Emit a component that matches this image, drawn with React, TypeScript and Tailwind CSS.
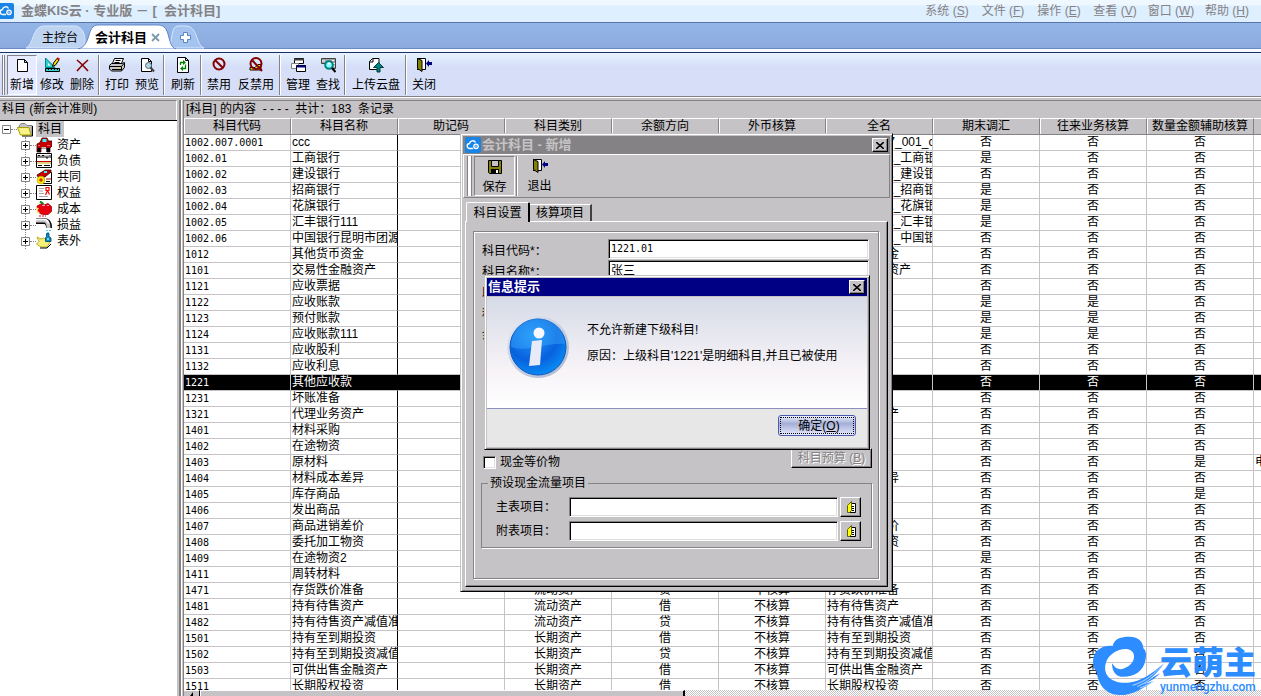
import React from 'react';

type IconProps = { name: string; size?: number };

interface Row {
  code: string;
  name: string;
  kind: string;
  dir: string;
  full?: string;
  fx?: boolean;
  trade?: boolean;
  qty?: boolean;
  unit?: string;
}

const CUR = '流动资产';
const LONG = '长期资产';

const ROWS: Row[] = [
  { code: '1002.007.0001', name: 'ccc', kind: CUR, dir: '借', full: '银行存款_07_001_ccc' },
  { code: '1002.01', name: '工商银行', kind: CUR, dir: '借', full: '银行存款_总_工商银行', fx: true },
  { code: '1002.02', name: '建设银行', kind: CUR, dir: '借', full: '银行存款_总_建设银行' },
  { code: '1002.03', name: '招商银行', kind: CUR, dir: '借', full: '银行存款_总_招商银行', fx: true },
  { code: '1002.04', name: '花旗银行', kind: CUR, dir: '借', full: '银行存款_总_花旗银行', fx: true },
  { code: '1002.05', name: '汇丰银行111', kind: CUR, dir: '借', full: '银行存款_总_汇丰银行111', fx: true },
  { code: '1002.06', name: '中国银行昆明市团源支行', kind: CUR, dir: '借', full: '银行存款_总_中国银行' },
  { code: '1012', name: '其他货币资金', kind: CUR, dir: '借' },
  { code: '1101', name: '交易性金融资产', kind: CUR, dir: '借' },
  { code: '1121', name: '应收票据', kind: CUR, dir: '借' },
  { code: '1122', name: '应收账款', kind: CUR, dir: '借', fx: true, trade: true },
  { code: '1123', name: '预付账款', kind: CUR, dir: '借', fx: true, trade: true },
  { code: '1124', name: '应收账款111', kind: CUR, dir: '借', full: '应收账款', fx: true, trade: true },
  { code: '1131', name: '应收股利', kind: CUR, dir: '借' },
  { code: '1132', name: '应收利息', kind: CUR, dir: '借' },
  { code: '1221', name: '其他应收款', kind: CUR, dir: '借' },
  { code: '1231', name: '坏账准备', kind: CUR, dir: '贷' },
  { code: '1321', name: '代理业务资产', kind: CUR, dir: '借' },
  { code: '1401', name: '材料采购', kind: CUR, dir: '借' },
  { code: '1402', name: '在途物资', kind: CUR, dir: '借' },
  { code: '1403', name: '原材料', kind: CUR, dir: '借', qty: true, unit: '电' },
  { code: '1404', name: '材料成本差异', kind: CUR, dir: '借' },
  { code: '1405', name: '库存商品', kind: CUR, dir: '借', qty: true },
  { code: '1406', name: '发出商品', kind: CUR, dir: '借' },
  { code: '1407', name: '商品进销差价', kind: CUR, dir: '贷' },
  { code: '1408', name: '委托加工物资', kind: CUR, dir: '借' },
  { code: '1409', name: '在途物资2', kind: CUR, dir: '借', fx: true },
  { code: '1411', name: '周转材料', kind: CUR, dir: '借' },
  { code: '1471', name: '存货跌价准备', kind: CUR, dir: '贷' },
  { code: '1481', name: '持有待售资产', kind: CUR, dir: '借' },
  { code: '1482', name: '持有待售资产减值准备', kind: CUR, dir: '贷' },
  { code: '1501', name: '持有至到期投资', kind: LONG, dir: '借' },
  { code: '1502', name: '持有至到期投资减值准备', kind: LONG, dir: '贷' },
  { code: '1503', name: '可供出售金融资产', kind: LONG, dir: '借' },
  { code: '1511', name: '长期股权投资', kind: LONG, dir: '借' },
];

const COLUMNS = ['科目代码', '科目名称', '助记码', '科目类别', '余额方向', '外币核算', '全名', '期末调汇', '往来业务核算', '数量金额辅助核算'];

const MENUS = [
  ['系统', 'S'],
  ['文件', 'F'],
  ['操作', 'E'],
  ['查看', 'V'],
  ['窗口', 'W'],
  ['帮助', 'H'],
];

const TOOLS = [
  [{ label: '新增', icon: 'new' }, { label: '修改', icon: 'edit' }, { label: '删除', icon: 'delete' }],
  [{ label: '打印', icon: 'print' }, { label: '预览', icon: 'preview' }],
  [{ label: '刷新', icon: 'refresh' }],
  [{ label: '禁用', icon: 'ban' }, { label: '反禁用', icon: 'unban' }],
  [{ label: '管理', icon: 'manage' }, { label: '查找', icon: 'find' }],
  [{ label: '上传云盘', icon: 'upload' }],
  [{ label: '关闭', icon: 'exit' }],
];

const TREE = [
  { label: '资产', icon: 'car' },
  { label: '负债', icon: 'bill' },
  { label: '共同', icon: 'shared' },
  { label: '权益', icon: 'cert' },
  { label: '成本', icon: 'apple' },
  { label: '损益', icon: 'tap' },
  { label: '表外', icon: 'bag' },
];

const ICONS: Record<string, React.ReactNode> = {
  new: <path d="M3.500 2.500h7l3 3v9h-10z M10.500 2.500v3h3" fill="#fff" stroke="#000" />,
  edit: (
    <>
      <path d="M1.500 1v9.500H11z" fill="#31cfce" stroke="#008284" />
      <path d="M4 6v2.500h2.500z" fill="#fff" />
      <path d="M1.500 11.500h14v3h-14z" fill="#31cfce" stroke="#000" />
      <path d="M4.500 12v1M7.500 12v1M10.500 12v1M13.500 12v1" stroke="#000" />
      <path d="M8.500 9.500l1-3.500 3.500-4.500 2 1.500-3.500 5z" fill="#ffdf00" stroke="#000" />
      <path d="M13 1l2.500 1.500" stroke="#d00" strokeWidth="2" />
    </>
  ),
  delete: <path d="M3 3l5 4.500 6 6.500M14 3L8 8.500 3 14" fill="none" stroke="#840000" strokeWidth="1.600" />,
  print: (
    <>
      <path d="M5.500 1.500h9l-2.500 6H3z" fill="#fff" stroke="#000" />
      <path d="M6.500 3.500h5M5.500 5.500h5" stroke="#000" />
      <path d="M.5 8.500l2-2h10.500l2.500-1v5l-3 3.500H2.500l-2-2z" fill="#c6c3c6" stroke="#000" />
      <path d="M1 9.500h11.500l2.500-3M3 12.500h9.500M12.500 9.500v4" stroke="#000" />
      <path d="M9 11h2" stroke="#ffdf00" />
    </>
  ),
  preview: (
    <>
      <path d="M2.500 1.500h7l3 3v10h-10z M9.500 1.500v3h3" fill="#fff" stroke="#000" />
      <circle cx="9.500" cy="8.500" r="3" fill="#a5d7e7" stroke="#636163" />
      <path d="M11.500 10.500l3.500 4" stroke="#424142" strokeWidth="2" />
    </>
  ),
  refresh: (
    <>
      <path d="M2.500 .5h8l3 3v12h-11z M10.500 .5v3h3" fill="#fff" stroke="#000" />
      <path d="M5.500 8V5.500h3M10.500 7.500v4h-3" stroke="#008200" strokeWidth="1.300" />
      <path d="M8 3l3 2.500L8 8zM8 9l-3 2.500L8 14z" fill="#008200" />
    </>
  ),
  ban: (
    <>
      <circle cx="8" cy="7" r="5.500" fill="none" stroke="#840000" strokeWidth="2" />
      <path d="M4 3l8 8" stroke="#840000" strokeWidth="2" />
    </>
  ),
  unban: (
    <>
      <path d="M2 10.500h5l3-3h3v5.500H2z" fill="#ffef00" stroke="#000" />
      <circle cx="8" cy="6.500" r="5.500" fill="none" stroke="#840000" strokeWidth="2" />
      <path d="M4 3l10 11" stroke="#840000" strokeWidth="2" />
    </>
  ),
  manage: (
    <>
      <path d="M4.500 1.500h9v5h-9z" fill="#fff" stroke="#000" />
      <path d="M4 2.500h10" stroke="#424142" strokeWidth="2" />
      <path d="M1.500 6.500h7v5h-7z" fill="#fff" stroke="#848284" />
      <path d="M6.500 8.500h9v6h-9z" fill="#fff" stroke="#000" />
      <path d="M6 9.500h10" stroke="#00007b" strokeWidth="2" />
    </>
  ),
  find: (
    <>
      <path d="M1.500 1.500h14v10h-4v-1h-6v-4h-4z" fill="#a5a2a5" stroke="#424142" />
      <path d="M2 4h3M12 3.500h2M13 6.500h2M13 9h2" stroke="#fff" />
      <circle cx="9" cy="8" r="3.800" fill="#84ffff" stroke="#008284" strokeWidth="2" />
      <path d="M8 7l2-1" stroke="#fff" strokeWidth="1.500" />
      <path d="M12 11l3.500 4" stroke="#000" strokeWidth="2" />
    </>
  ),
  upload: (
    <>
      <path d="M1.500 12.500v-8l3-3h6.500v11z M5 1.500v3.500H1.500" fill="#fff" stroke="#000" />
      <path d="M10.500 5.500l5 5h-3.500v4.500H9v-4.500H5.500z" fill="#008284" stroke="#003c3c" />
    </>
  ),
  exit: (
    <>
      <path d="M1 1.500h8.500v11H1" fill="#fff" stroke="#000" />
      <path d="M1.500 1.500l4.500 2v11l-4.500-3z" fill="#848200" stroke="#000" />
      <path d="M10 6.500L13 3v2h3v3h-3v2z" fill="#000084" />
    </>
  ),
  save: (
    <>
      <path d="M1.500 1.500h13v13h-12l-1-1z" fill="#848200" stroke="#000" />
      <path d="M4.500 1.500h7v6h-7z" fill="#c6c3c6" stroke="#000" />
      <path d="M4 10h8v4H4z" fill="#000" />
      <path d="M9 11h2v3H9z" fill="#fff" />
    </>
  ),
  lookup: (
    <>
      <path d="M8.500 4.500h4v9h-6" fill="#fff" stroke="#000" />
      <path d="M9 7.500h2M9 9.500h2M9 11.500h2" stroke="#000" />
      <path d="M4.500 6.500l4-4v9l-2 2h-2z" fill="#ffff00" stroke="#636100" />
    </>
  ),
  folder: (
    <>
      <path d="M2 5l2-2.500h4l2 2h5v9.500H5z" fill="#c6c3c6" stroke="#848284" />
      <path d="M15.500 5v10H5" stroke="#000" />
      <path d="M.5 6.500h11.500l2 7.500H3.500z" fill="#f7ef73" stroke="#a5a200" />
      <path d="M3 8h8M4 10h8M5 12h7" stroke="#fffbce" strokeDasharray="1 1" />
    </>
  ),
  car: (
    <>
      <path d="M1 7l3-1.500L6 1h5l1.500 3H16v5l-2 2v4h-3v-4H5v4H1z" fill="#c60000" stroke="#420000" strokeWidth=".8" />
      <path d="M6.500 2h4v3h-4z" fill="#42efff" />
      <path d="M1.500 11h3v4h-3zM10.500 11h3.500v4h-3.500z" fill="#000" />
      <path d="M2 8.500h2M11 8.500h3" stroke="#f66" />
      <path d="M5.500 10.500h4.500" stroke="#c6c3c6" />
    </>
  ),
  bill: (
    <>
      <path d="M.5 .5h15v14H.5z" fill="#fff" stroke="#000" />
      <path d="M2 5V2.500h2V5M6 5V2.500h2V5M10 2.500V5h2V2.500M14 2v3" stroke="#000" />
      <path d="M1 8.500h14" stroke="#c00000" />
      <path d="M1 10h14" stroke="#c6a600" />
      <path d="M2 12.500h4M8 12.500h6" stroke="#000" />
    </>
  ),
  shared: (
    <>
      <path d="M7.500 3.500h8v11h-8z" fill="#fff" stroke="#000" />
      <path d="M1 6l5-3 3-2h6v2L9 8H2z" fill="#c60000" stroke="#420000" strokeWidth=".8" />
      <path d="M8 2h3v2H8z" fill="#42efff" />
      <path d="M10 10h5" stroke="#c00000" />
      <path d="M10 12.500h4" stroke="#000" />
      <circle cx="5" cy="11" r="3.800" fill="#ffef00" stroke="#c6a600" strokeWidth=".8" />
      <path d="M5 9v4M3 11h4" stroke="#c00000" />
    </>
  ),
  cert: (
    <>
      <path d="M.5 .5h15v14H.5z" fill="#fff" stroke="#000" />
      <path d="M3 3.500h5M3 6h4M3 8.500h5M3 11.500h9" stroke="#a5a2a5" />
      <path d="M10 2.500h3v3h-3zM11.500 5.500l-2 4.500M11.500 5.500l2 4" fill="none" stroke="#f00" strokeWidth="1.200" />
    </>
  ),
  apple: (
    <>
      <path d="M7.500 3L4 .5" stroke="#008200" strokeWidth="2" />
      <path d="M1 5l4-2 3 1 4-1.500 3.500 3v5L12 13.500H8L5 13l-3-2z" fill="#e70010" stroke="#a50000" strokeWidth=".8" />
      <path d="M0 6l3 1.500L1.500 9.500 4 12 1 12z" fill="#ffdf63" />
      <path d="M6 4.500h3M11 4.500h2" stroke="#ff9ac6" />
      <path d="M3 15h7" stroke="#e70010" strokeDasharray="2 1" />
    </>
  ),
  tap: (
    <>
      <path d="M0 4h8q5 0 5 7" fill="none" stroke="#000" strokeWidth="6" />
      <path d="M0 3.500h8q4.500 0 4.500 7.500" fill="none" stroke="#c6c3c6" strokeWidth="4" />
      <path d="M0 2.500h8q3.500 0 4.500 4" stroke="#fff" strokeWidth="1.500" />
      <path d="M10 13.500h5M11 15.500h3" stroke="#42d7ff" strokeDasharray="2 1" />
    </>
  ),
  bag: (
    <>
      <path d="M1 4l4 2 3-1 3 3 3 1-3 5H5l-4.500-3L3 8.500z" fill="#f7ef7b" stroke="#a5a200" strokeWidth=".8" />
      <path d="M4 15h7l4-4" stroke="#000" fill="none" />
      <path d="M10.500 .5h2.500v3l2 1.500v3.500h-5.500V5l1-1.500z" fill="#0092c6" stroke="#003c63" strokeWidth=".8" />
      <path d="M11 6h2" stroke="#fff" />
    </>
  ),
};

const Icon: React.FC<IconProps> = ({ name, size = 16 }) => (
  <svg width={size} height={size} viewBox="0 0 16 16" fill="none" className="block shrink-0" aria-hidden="true">
    {ICONS[name]}
  </svg>
);

const CloudLogo: React.FC = () => (
  <svg width="16" height="16" viewBox="0 0 16 16" className="block shrink-0" aria-hidden="true">
    <rect width="16" height="16" rx="2" fill="#1884e7" />
    <path d="M8 11.500H5a2.500 2.500 0 0 1-.5-5 3.200 3.200 0 0 1 6-1" fill="none" stroke="#fff" strokeWidth="1.400" />
    <circle cx="11" cy="9.300" r="2.200" fill="none" stroke="#fff" strokeWidth="1.300" />
    <circle cx="11" cy="9.300" r=".7" fill="#fff" />
  </svg>
);

const CloseButton: React.FC = () => (
  <button
    aria-label="关闭"
    className="flex h-[14px] w-4 items-center justify-center border border-t-white border-l-white border-r-black border-b-black bg-[#c6c3c6] shadow-[inset_-1px_-1px_0_#848284]"
  >
    <svg width="8" height="7" viewBox="0 0 8 7" aria-hidden="true">
      <path d="M0 0l8 7M8 0L0 7" stroke="#000" strokeWidth="1.600" />
    </svg>
  </button>
);

const TitleBar: React.FC = () => (
  <header className="flex h-[22px] shrink-0 items-center justify-between bg-linear-to-b from-[#eff7ff] from-20% to-[#deefff] to-30% text-[#848284]">
    <div className="flex items-center gap-[7px]">
      <div className="-ml-[2px]">
        <CloudLogo />
      </div>
      <h1 className="text-[13px] leading-5 font-bold whitespace-pre">金蝶KIS云 · 专业版 － [  会计科目]</h1>
    </div>
    <nav className="flex pr-[6px]">
      {MENUS.map(([label, key]) => (
        <button key={key} className="w-14 text-xs leading-5">
          {label} (<u>{key}</u>)
        </button>
      ))}
    </nav>
  </header>
);

const TabBar: React.FC = () => (
  <div className="relative h-[27px] shrink-0 border-t border-b border-t-[#5a75ad] border-b-[#6b8ac6] bg-linear-to-b from-[#94b6e7] to-[#8caade]">
    <svg width="210" height="26" viewBox="0 0 210 26" className="absolute top-0 left-0" aria-hidden="true">
      <path d="M26 25C34 22 32 3 44 3h30c12 0 12 16 10 22z" fill="#bdd3ef" stroke="#d6e7ff" />
      <path d="M168 25c5-4 2-22 10-22h8c12 0 10 20 18 22z" fill="#a5c3ef" stroke="#d6e7ff" />
      <path d="M78 26c14-3 8-24 20-24h60c14 0 8 21 18 24z" fill="#fff" stroke="#4a75bd" strokeWidth=".8" />
      <path d="M75 26h104v1H75z" fill="#fff" />
      <path d="M183.500 9.500h4v3h3v4h-3v3h-4v-3h-3v-4h3z" fill="#fff" stroke="#5a86c6" />
    </svg>
    <div className="relative flex h-full items-center pt-1 pl-9">
      <button className="w-[48px] text-xs">主控台</button>
      <button className="ml-[11px] flex items-center gap-1 text-[13px] font-bold">
        会计科目
        <svg width="9" height="9" viewBox="0 0 9 9" aria-hidden="true">
          <path d="M1 1l7 7M8 1L1 8" stroke="#7b9aad" strokeWidth="1.800" />
        </svg>
      </button>
      <button aria-label="新建标签" className="ml-3 h-5 w-7" />
    </div>
  </div>
);

const Toolbar: React.FC = () => (
  <div className="flex h-11 shrink-0 items-stretch border-b border-[#848284] bg-linear-to-b from-[#e7f3ff] via-[#d6dff7] via-30% to-[#d6dff7] pt-[2px] pb-px pl-[2px]">
    <div className="mr-[2px] w-[3px] border-x border-[#848284] bg-white" />
    {TOOLS.map((group, i) => (
      <div key={i} className="flex items-stretch">
        {i > 0 && <div className="mr-[2px] ml-px w-[2px] border-l border-[#848284] bg-white" />}
        {group.map(t => (
          <button
            key={t.label}
            className={`flex flex-col items-center gap-1 border pt-px text-xs leading-4 whitespace-nowrap ${
              t.label.length === 4 ? 'w-14' : t.label.length === 3 ? 'w-11' : t.icon === 'refresh' ? 'w-8' : 'w-[30px]'
            } ${t.icon === 'new' ? 'border-t-[#848284] border-r-white border-b-white border-l-[#848284] bg-[#e7ebff]' : 'border-transparent'}`}
          >
            <Icon name={t.icon} />
            <span>{t.label}</span>
          </button>
        ))}
      </div>
    ))}
  </div>
);

const Expander: React.FC<{ open?: boolean }> = ({ open }) => (
  <svg width="9" height="9" viewBox="0 0 9 9" className="relative block shrink-0 bg-white" aria-hidden="true">
    <path d="M.5 .5h8v8h-8z" fill="#fff" stroke="#848284" />
    <path d={open ? 'M2 4.500h5' : 'M2 4.500h5M4.500 2v5'} stroke="#000" />
  </svg>
);

const TreePanel: React.FC = () => (
  <aside className="flex w-[177px] shrink-0 flex-col">
    <h2 className="h-5 shrink-0 border-t border-r border-t-[#848284] border-r-white pl-[2px] text-xs leading-[17px]">科目 (新会计准则)</h2>
    <div className="flex-1 border-t border-black bg-white text-xs leading-4">
      <div className="flex h-4 items-center pl-[2px]">
        <Expander open />
        <span className="w-[6px] border-t border-dotted border-[#848284]" />
        <Icon name="folder" />
        <span className="ml-[3px] bg-[#c6c3c6] px-[2px]">科目</span>
      </div>
      <ul className="ml-[25px] border-l border-dotted border-[#848284]">
        {TREE.map(n => (
          <li key={n.label} className="-ml-[5px] flex h-4 items-center">
            <Expander />
            <span className="w-[6px] border-t border-dotted border-[#848284]" />
            <Icon name={n.icon} />
            <span className="ml-[5px]">{n.label}</span>
          </li>
        ))}
      </ul>
    </div>
  </aside>
);

const yn = (v?: boolean) => (v ? '是' : '否');

const AccountTable: React.FC = () => {
  const td = 'h-4 overflow-hidden border-r border-b border-[#c6c3c6] p-0 whitespace-nowrap';
  return (
    <table className="w-full table-fixed border-separate border-spacing-0 text-xs leading-[15px]">
      <colgroup>
        {COLUMNS.map(c => (
          <col key={c} className="w-[107px]" />
        ))}
        <col />
      </colgroup>
      <thead>
        <tr>
          {COLUMNS.map(c => (
            <th key={c} className="h-[17px] border-t border-r border-b border-t-white border-r-[#848284] border-b-[#848284] bg-[#c6c3c6] p-0 font-normal whitespace-nowrap shadow-[inset_1px_0_0_#fff]">
              {c}
            </th>
          ))}
          <th className="border-t border-b border-t-white border-b-[#848284] bg-[#c6c3c6] p-0" />
        </tr>
      </thead>
      <tbody>
        {ROWS.map(r => (
          <tr key={r.code} className={r.code === '1221' ? 'bg-black text-white' : 'bg-white'}>
            <td className={`${td} pl-px font-['DejaVu_Sans_Mono',monospace] text-[10px]`}>{r.code}</td>
            <td className="h-4 overflow-hidden border-r border-b border-r-black border-b-[#c6c3c6] p-0 pl-px whitespace-nowrap">{r.name}</td>
            <td className={td} />
            <td className={`${td} text-center`}>{r.kind}</td>
            <td className={`${td} text-center`}>{r.dir}</td>
            <td className={`${td} text-center`}>不核算</td>
            <td className={`${td} pl-px`}>{r.full ?? r.name}</td>
            <td className={`${td} text-center`}>{yn(r.fx)}</td>
            <td className={`${td} text-center`}>{yn(r.trade)}</td>
            <td className={`${td} text-center`}>{yn(r.qty)}</td>
            <td className="h-4 overflow-hidden border-b border-[#c6c3c6] p-0 pl-px whitespace-nowrap">{r.unit}</td>
          </tr>
        ))}
      </tbody>
    </table>
  );
};

const inputCls =
  'h-5 min-w-0 border border-t-[#848284] border-l-[#848284] border-r-white border-b-white bg-white pb-[2px] pl-[2px] leading-4 shadow-[inset_1px_1px_0_#000,inset_-1px_-1px_0_#dedfde] outline-none';

const FIELDS = [
  { id: 'code', label: '科目代码*：', value: '1221.01', mono: true },
  { id: 'name', label: '科目名称*：', value: '张三' },
  { id: 'memo', label: '助记码：', value: '' },
  { id: 'kind', label: '科目类别*：', value: '' },
  { id: 'dir', label: '余额方向：', value: '' },
];

const FLOW_FIELDS = [
  { id: 'main-item', label: '主表项目：' },
  { id: 'sub-item', label: '附表项目：' },
];

const AccountDialog: React.FC = () => (
  <section
    role="dialog"
    aria-label="会计科目 - 新增"
    className="absolute top-[133px] left-[460px] flex h-[459px] w-[433px] flex-col border border-t-[#c6c3c6] border-l-[#c6c3c6] border-r-black border-b-black bg-[#c6c3c6] p-[2px] text-xs shadow-[inset_1px_1px_0_#fff,inset_-1px_-1px_0_#848284]"
  >
    <div className="flex h-[18px] shrink-0 items-center bg-[#848284] px-[2px] text-[13px] font-bold text-[#c6c3c6]">
      <CloudLogo />
      <h2 className="ml-px flex-1 whitespace-pre">会计科目 - 新增</h2>
      <CloseButton />
    </div>
    <div className="flex h-11 shrink-0 border border-t-white border-r-[#848284] border-b-[#848284] border-l-white pt-px pb-px pl-[3px]">
      <div className="mr-[2px] w-[5px] border-x border-[#848284] bg-white" />
      <button className="flex w-[41px] flex-col items-center gap-1 border border-t-[#848284] border-r-white border-b-white border-l-[#848284] pt-[2px] leading-4">
        <Icon name="save" />
        保存
      </button>
      <div className="ml-px w-[2px] border-l border-[#848284] bg-white" />
      <button className="ml-px flex w-[41px] flex-col items-center gap-1 pt-[2px] leading-4">
        <Icon name="exit" />
        退出
      </button>
    </div>
    <div className="mt-1 ml-[3px] flex shrink-0 items-end">
      <button className="relative -mb-px h-5 w-16 rounded-t-[2px] border-t border-r-2 border-l border-t-white border-r-black border-l-white bg-[#c6c3c6]">科目设置</button>
      <button className="h-[17px] w-[62px] border-t border-r-2 border-t-white border-r-[#424142]">核算项目</button>
    </div>
    <div className="mx-[2px] mb-[2px] flex flex-1 flex-col border border-t-white border-r-black border-b-black border-l-white pt-[9px] pr-2 pb-[7px] pl-[7px] shadow-[inset_-1px_-1px_0_#848284]">
      <div className="flex flex-1 flex-col border border-[#848284] pt-[7px] pr-[6px] pb-[30px] pl-[7px] shadow-[inset_1px_1px_0_#fff,1px_1px_0_#fff]">
        {FIELDS.map(f => (
          <div key={f.id} className="mb-px flex h-5 shrink-0 items-center pr-[3px] pl-px">
            <label htmlFor={f.id} className="w-[126px] pt-1">
              {f.label}
            </label>
            <input
              id={f.id}
              defaultValue={f.value}
              className={`${inputCls} flex-1 ${f.mono ? "font-['DejaVu_Sans_Mono',monospace] text-[10px]" : 'text-xs'}`}
            />
          </div>
        ))}
        <div className="mt-auto flex h-5 items-center justify-between pl-[2px]">
          <label className="flex items-center gap-1 pt-2">
            <input
              type="checkbox"
              className="h-[13px] w-[13px] appearance-none border border-t-[#848284] border-l-[#848284] border-r-white border-b-white bg-white shadow-[inset_1px_1px_0_#000,inset_-1px_-1px_0_#dedfde]"
            />
            现金等价物
          </label>
          <button
            disabled
            className="h-5 w-[81px] border border-t-white border-r-black border-b-black border-l-white text-[#848284] shadow-[inset_-1px_-1px_0_#848284] text-shadow-[1px_1px_0_#fff]"
          >
            科目预算 (<u>B</u>)
          </button>
        </div>
        <fieldset className="mt-[9px] shrink-0 border border-[#848284] px-[14px] pt-2 pb-[6px] shadow-[1px_1px_0_#fff]">
          <legend className="-ml-2 px-[2px] leading-3">预设现金流量项目</legend>
          {FLOW_FIELDS.map((f, i) => (
            <div key={f.id} className={`flex h-5 items-center ${i ? 'mt-1' : ''}`}>
              <label htmlFor={f.id} className="w-[73px]">
                {f.label}
              </label>
              <input id={f.id} className={`${inputCls} flex-1 text-xs`} />
              <button
                aria-label={`选择${f.label}`}
                className="-mr-1 ml-[2px] flex h-5 w-[21px] items-center justify-center border border-t-white border-r-black border-b-black border-l-white shadow-[inset_-1px_-1px_0_#848284]"
              >
                <Icon name="lookup" />
              </button>
            </div>
          ))}
        </fieldset>
      </div>
    </div>
  </section>
);

const InfoIcon: React.FC = () => (
  <svg width="64" height="64" viewBox="0 0 64 64" className="shrink-0" aria-hidden="true">
    <defs>
      <linearGradient id="rim" x1="0" y1="0" x2="1" y2="1">
        <stop offset="0" stopColor="#e7ebf7" />
        <stop offset="1" stopColor="#a5b6ce" />
      </linearGradient>
      <radialGradient id="ball" cx=".4" cy=".3" r=".75">
        <stop offset="0" stopColor="#2196f7" />
        <stop offset=".6" stopColor="#0861de" />
        <stop offset="1" stopColor="#0892f7" />
      </radialGradient>
    </defs>
    <circle cx="31" cy="32" r="31" fill="url(#rim)" />
    <circle cx="31" cy="32" r="28" fill="url(#ball)" stroke="#1055bd" />
    <path d="M4 32a27 27 0 0 1 54-3C41 27 21 38 4 32z" fill="#42b2ff" opacity=".4" />
    <circle cx="32" cy="18" r="5.500" fill="#f7f7ff" />
    <path d="M25 26l10-1-2 25-11 1z" fill="#e7ebf7" />
  </svg>
);

const MessageDialog: React.FC = () => (
  <section
    role="alertdialog"
    aria-label="信息提示"
    className="absolute top-[275px] left-[484px] flex h-[175px] w-[386px] flex-col border border-t-[#c6c3c6] border-l-[#c6c3c6] border-r-black border-b-black bg-[#c6c3c6] p-[2px] text-xs shadow-[inset_1px_1px_0_#fff,inset_-1px_-1px_0_#848284]"
  >
    <div className="flex h-[18px] shrink-0 items-center justify-between bg-[#000084] pr-[2px] pl-px text-[13px] font-bold text-white">
      <h2>信息提示</h2>
      <CloseButton />
    </div>
    <div className="mt-px flex flex-1 items-start border-b border-[#8c8ebd] bg-linear-to-b from-[#d6dbe7] via-[#f7f3f7] via-65% to-white pt-[18px] pl-5">
      <InfoIcon />
      <div className="ml-4 leading-4">
        <p className="mt-[7px]">不允许新建下级科目!</p>
        <p className="mt-[10px]">原因：上级科目'1221'是明细科目,并且已被使用</p>
      </div>
    </div>
    <div className="flex h-[38px] shrink-0 items-start justify-end bg-[#e7e7e7] pt-[6px] pr-[11px]">
      <button className="h-[21px] w-[78px] rounded-[3px] border border-[#4a59ad] bg-linear-to-b from-[#eff3ff] via-[#a5aed6] via-40% to-[#e7ebff] p-px">
        <span className="flex h-full items-center justify-center border border-dotted border-black pt-px pl-1">
          确定(<u>O</u>)
        </span>
      </button>
    </div>
  </section>
);

const Watermark: React.FC = () => (
  <div className="pointer-events-none absolute right-[5px] bottom-0 flex items-end text-[#2d8cff]">
    <svg width="72" height="60" viewBox="18 18 216 180" aria-hidden="true">
      <path
        d="M80 48C85 25 105 20 130 20c30 0 42 18 42 35 10 7 9 25 6 37-6 33-38 51-73 48-15-2-27-15-27-40 10 16 22 22 37 15 20-7 33-25 28-43-5-16-25-18-43-12-30 10-46 35-42 62 5 28 37 38 67 36 40-3 75-28 110-60-20 32-40 48-62 58l49-26c-12 14-32 26-52 34l35-12c-28 20-55 36-85 42-10 2-25 2-40-2-30-10-45-37-48-67-12-10-14-35-7-50 7-20 35-30 55-27z"
        fill="currentColor"
      />
      <path d="M235 98c-30 36-60 58-95 68M224 120c-25 25-45 38-70 50M218 142c-20 16-34 24-56 32" fill="none" stroke="#fff" strokeWidth="2" />
    </svg>
    <div className="-ml-1 pb-[3px]">
      <div className="text-[32px] leading-9 font-black">云萌主</div>
      <div className="font-['Roboto',sans-serif] text-xs leading-3 font-medium">yunmengzhu.com</div>
    </div>
  </div>
);

export default function App() {
  return (
    <div className="relative flex h-screen flex-col overflow-hidden bg-[#c6c3c6] font-['Liberation_Sans','Noto_Sans_CJK_SC',sans-serif] text-black">
      <TitleBar />
      <TabBar />
      <div className="h-1 shrink-0 border-b border-[#183063] bg-[#f7fbff]" />
      <Toolbar />
      <main className="flex min-h-0 flex-1 border-t border-white pt-[2px]">
        <TreePanel />
        <div className="w-[7px] shrink-0 border-r border-[#848284]">
          <div className="ml-[2px] h-full w-[3px] border-x border-l-[#848284] border-r-white bg-[#848284]" />
        </div>
        <section className="flex min-w-0 flex-1 flex-col">
          <h2 className="h-[18px] shrink-0 border-t border-[#848284] pl-[2px] text-xs leading-4 whitespace-pre">[科目] 的内容  - - - -  共计：183  条记录</h2>
          <div className="min-h-0 flex-1 overflow-hidden bg-white">
            <AccountTable />
          </div>
          <div className="flex h-[6px] shrink-0 bg-[repeating-conic-gradient(#fff_0_25%,#c6c3c6_0_50%)] bg-[length:2px_2px]">
            <button aria-label="向左滚动" className="h-full w-4 border-t border-r border-t-white border-r-black bg-[#c6c3c6]">
              <svg width="8" height="4" viewBox="0 0 8 4" className="mx-auto" aria-hidden="true">
                <path d="M5 0v4L2 4z" />
              </svg>
            </button>
            <div className="w-[45%] border-t border-r-2 border-l border-t-white border-r-black border-l-white bg-[#c6c3c6]" />
          </div>
        </section>
      </main>
      <AccountDialog />
      <MessageDialog />
      <Watermark />
    </div>
  );
}
